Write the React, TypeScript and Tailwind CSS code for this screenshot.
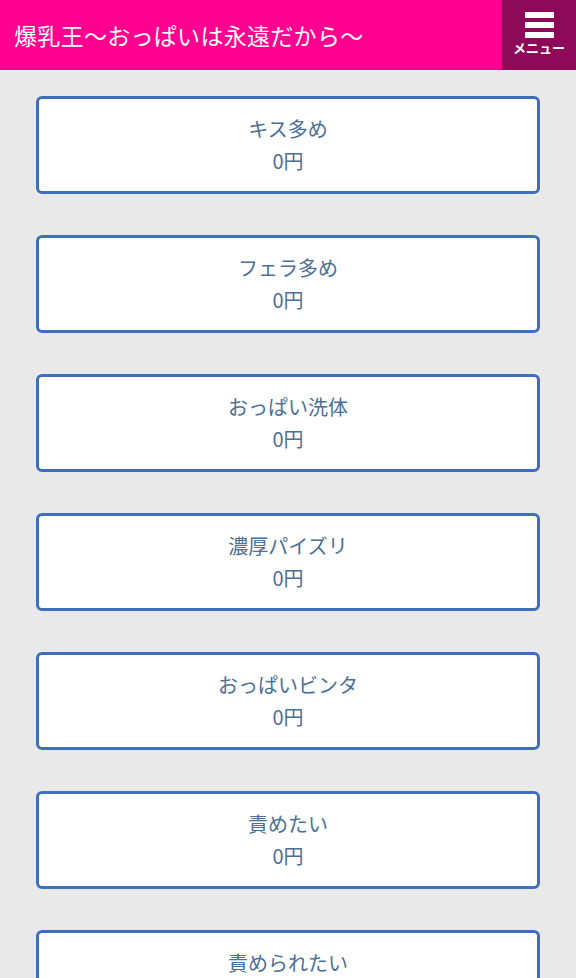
import React from 'react';

const items = [
    'キス多め',
    'フェラ多め',
    'おっぱい洗体',
    '濃厚パイズリ',
    'おっぱいビンタ',
    '責めたい',
    '責められたい',
];

const App: React.FC = () => {
    return (
        <div className="min-h-[978px] bg-[#e9e9e9] font-['Noto_Sans_CJK_JP',sans-serif]">
            <header className="flex h-[70px] items-stretch bg-[#ff0090]">
                <h1 className="flex flex-1 items-center pl-[14px] text-[23px] font-normal tracking-[0.3px] text-white">
                    爆乳王〜おっぱいは永遠だから〜
                </h1>
                <button className="flex w-[74px] flex-col items-center bg-[#8c0a57] pt-[12px]">
                    <span className="flex flex-col gap-[4px]">
                        <span className="block h-[6px] w-[29px] bg-white" />
                        <span className="block h-[6px] w-[29px] bg-white" />
                        <span className="block h-[6px] w-[29px] bg-white" />
                    </span>
                    <span className="mt-[3px] text-[13px] font-bold leading-[14px] text-white">メニュー</span>
                </button>
            </header>

            <div className="flex flex-col gap-[41px] px-[36px] pt-[26px] pb-[40px]">
                {items.map((name) => (
                    <a
                        key={name}
                        href="#"
                        className="block h-[98px] rounded-[6px] border-[3px] border-[#3f6fb8] bg-white pt-[14px] text-center text-[20px] leading-[32px] text-[#4a6f98]"
                    >
                        <div>{name}</div>
                        <div>0円</div>
                    </a>
                ))}
            </div>
        </div>
    );
};

export default App;
